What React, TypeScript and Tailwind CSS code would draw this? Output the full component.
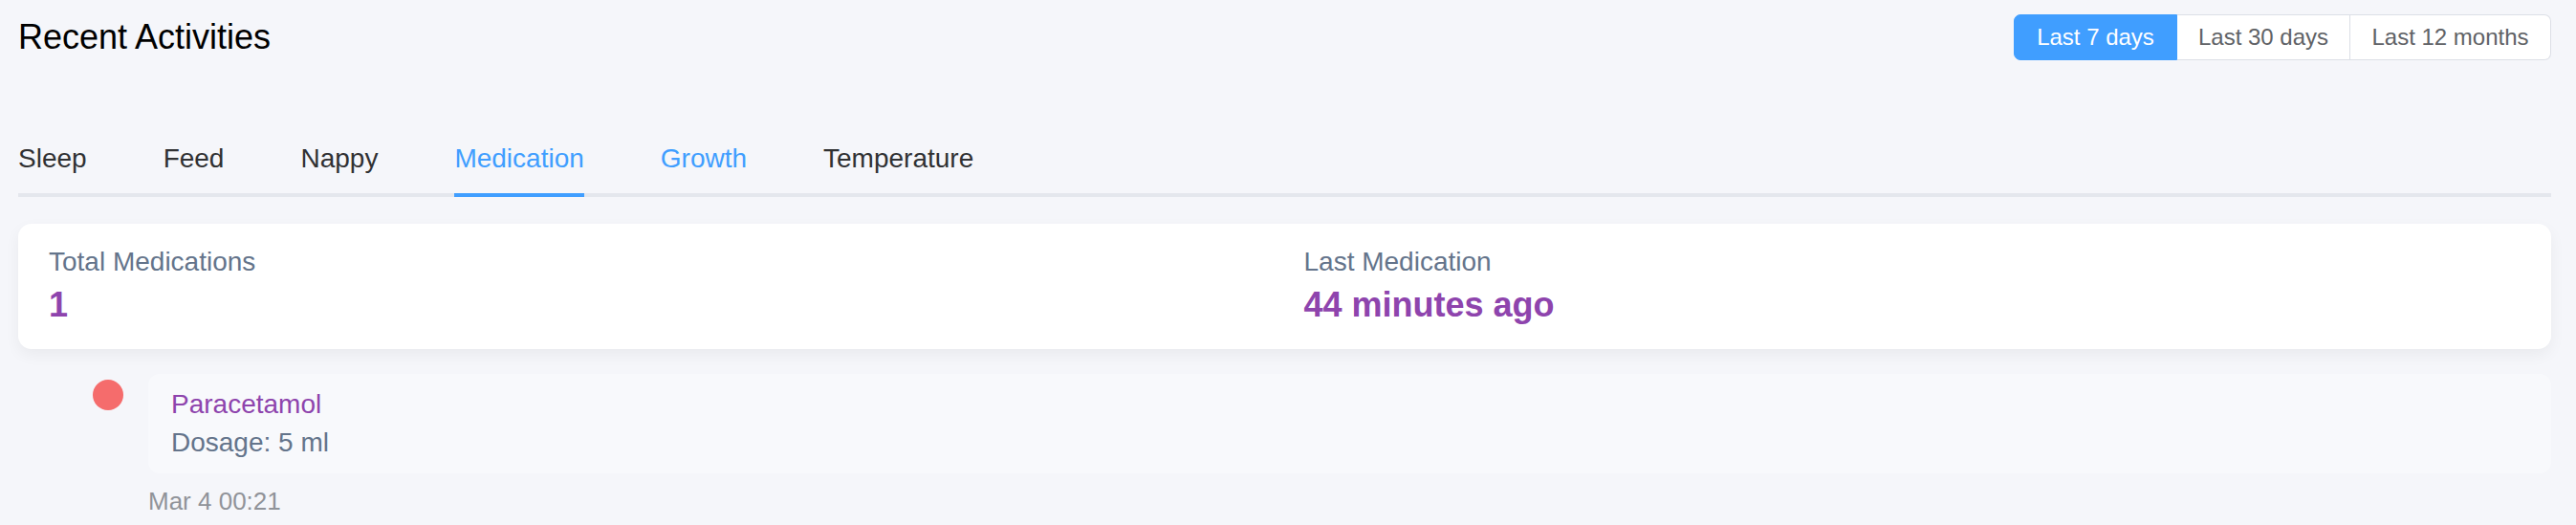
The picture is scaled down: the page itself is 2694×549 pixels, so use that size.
import React, { useState } from "react";

const ranges = [
  { label: "Last 7 days", width: "w-[171px]" },
  { label: "Last 30 days", width: "w-[181px]" },
  { label: "Last 12 months", width: "w-[210px]" },
];
const tabs = ["Sleep", "Feed", "Nappy", "Medication", "Growth", "Temperature"];

const App: React.FC = () => {
  const [range, setRange] = useState(0);
  const [tab, setTab] = useState(3);

  return (
    <div className="min-h-screen bg-[#f5f6fa] pl-[19px] pr-[26px] pt-[15px] font-['Liberation_Sans',Arial,sans-serif]">
      <div className="flex items-center justify-between">
        <h2 className="text-[36px] leading-none text-black">Recent Activities</h2>
        <div className="flex">
          {ranges.map((r, i) => (
            <button
              key={r.label}
              onClick={() => setRange(i)}
              className={
                r.width +
                " h-[48px] text-center text-[24px] leading-none border-y border-r " +
                (i === 0 ? "border-l rounded-l-[7px] " : "") +
                (i === ranges.length - 1 ? "rounded-r-[7px] " : "") +
                (range === i
                  ? "bg-[#409eff] border-[#409eff] text-white"
                  : "bg-white border-[#dcdfe6] text-[#606266]")
              }
            >
              {r.label}
            </button>
          ))}
        </div>
      </div>

      <nav className="mt-[63px] flex border-b-4 border-[#e4e7ed]">
        {tabs.map((t, i) => {
          const active = tab === i;
          const blue = active || t === "Growth";
          return (
            <div
              key={t}
              onClick={() => setTab(i)}
              className={
                "-mb-[4px] cursor-pointer " +
                (i === 0 ? "pr-10" : i === tabs.length - 1 ? "pl-10" : "px-10")
              }
            >
              <span
                className={
                  "block h-[80px] box-border border-b-4 pt-[3px] text-[28px] leading-[73px] " +
                  (active ? "border-[#409eff] " : "border-transparent ") +
                  (blue ? "text-[#409eff]" : "text-[#303133]")
                }
              >
                {t}
              </span>
            </div>
          );
        })}
      </nav>

      <div className="mt-[28px] grid grid-cols-2 gap-x-[40px] rounded-[14px] bg-white px-8 pt-5 pb-6 shadow-[0_6px_16px_rgba(0,0,0,0.05)]">
        <div>
          <div className="text-[28px] leading-[40px] text-[#64748b]">Total Medications</div>
          <div className="mt-[3px] text-[36px] font-bold leading-[44px] text-[#8e44ad]">1</div>
        </div>
        <div>
          <div className="text-[28px] leading-[40px] text-[#64748b]">Last Medication</div>
          <div className="mt-[3px] text-[36px] font-bold leading-[44px] text-[#8e44ad]">44 minutes ago</div>
        </div>
      </div>

      <div className="mt-[26px] flex pl-[78px]">
        <div className="mt-[6px] h-8 w-8 shrink-0 rounded-full bg-[#f56c6c]" />
        <div className="ml-[26px] flex-1">
          <div className="rounded-[12px] bg-[#f8f9fc] px-6 py-[12px]">
            <div className="text-[28px] leading-[40px] text-[#8e44ad]">Paracetamol</div>
            <div className="text-[28px] leading-[40px] text-[#64748b]">Dosage: 5 ml</div>
          </div>
          <div className="mt-[16px] text-[26px] leading-none text-[#909399]">Mar 4 00:21</div>
        </div>
      </div>
    </div>
  );
};

export default App;
